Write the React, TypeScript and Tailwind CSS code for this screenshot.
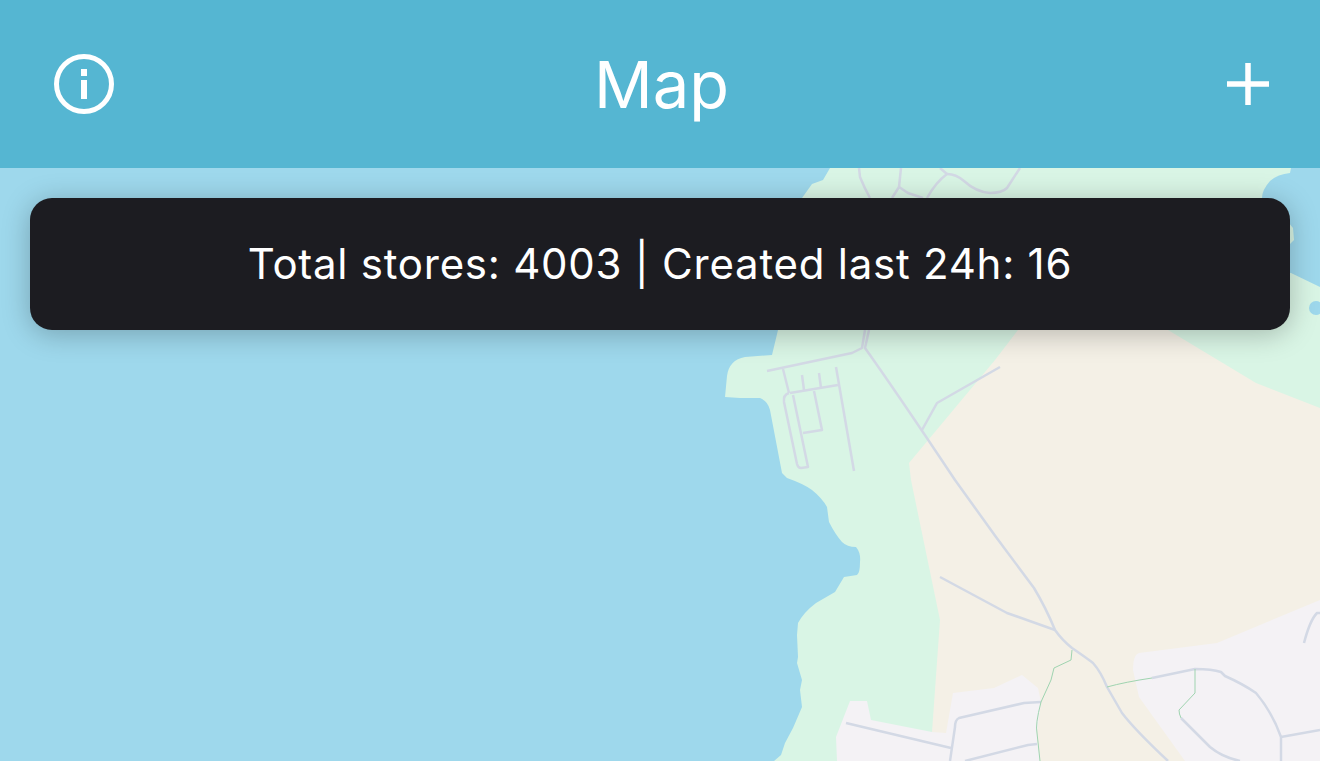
const roads = [
  "M865 330 L862 348 L852 353 L767 371",
  "M869 330 L865 348 C885 376 915 420 955 480 L996 537 L1034 588 Q1046 608 1055 630 Q1062 640 1072 648 Q1088 659 1093 663 Q1101 672 1107 687 L1122 713 Q1135 730 1168 761",
  "M940 577 L1007 613 L1055 630",
  "M922 430 L937 403 L1000 367",
  "M783 369 L789 393",
  "M802 375 L804 390",
  "M819 373 L821 388",
  "M836 367 L854 471",
  "M790 393 L838 385",
  "M814 391 L822 430 L803 433",
  "M789 393 Q783 395 784 402 L797 464 Q798 468 801 468 L808 467 L793 395",
  "M1041 702 L1024 703 L959 718 Q955 720 955 727 L950 761",
  "M846 723 L951 748",
  "M965 761 L1028 745 L1037 744",
  "M1152 678 L1195 669 Q1212 669 1221 672 L1225 676 Q1243 684 1256 693 Q1272 712 1281 737 L1281 761",
  "M1281 737 L1320 730",
  "M1181 718 L1210 747 Q1222 757 1240 761",
  "M1304 643 Q1310 620 1317 613 L1320 613",
  "M859 168 L860 177 Q864 187 870 198",
  "M901 168 L899 187 L892 198",
  "M899 187 L908 193 L923 198",
  "M940 168 L947 174 Q936 182 927 198",
  "M947 174 Q956 174 964 181 Q976 192 990 193 Q1002 193 1007 188 L1020 168",
];

const paths = [
  "M1072 650 L1071 660 L1054 668 L1051 680 L1041 702 Q1035 725 1037 733 L1040 761",
  "M1107 687 Q1125 682 1152 678",
  "M1195 669 L1195 693 L1179 710 Q1179 714 1181 718",
];

function MapCanvas() {
  return (
    <svg className="absolute inset-0 w-full h-full" viewBox="0 168 1320 593" preserveAspectRatio="none">
      <rect x="0" y="168" width="1320" height="593" fill="#d9f5e5" />
      {/* water */}
      <path
        fill="#9ed8ec"
        d="M0 168 H830 L823 180 L812 184 L802 198 L778 330 L772 355 L745 357 Q729 360 727 376 L725 397 L740 398 L760 398 Q768 401 770 410 L782 473 L787 478 Q804 484 812 490 Q822 498 827 507 L829 522 Q835 534 842 542 Q847 547 856 547 Q861 553 860 562 Q860 573 857 575 L844 577 L835 592 L816 603 Q804 612 798 623 L797 635 L798 657 L797 663 L802 680 L800 690 L802 707 L793 728 L785 743 L781 755 L774 761 H0 Z"
      />
      <path
        fill="#9ed8ec"
        d="M1291 168 L1290 173 Q1278 174 1270 181 Q1262 190 1262 198 V270 L1291 273 L1320 287 V168 Z"
      />
      <polygon fill="#d9f5e5" points="1288,222 1293,228 1294,240 1288,246" />
      <circle cx="1316" cy="308" r="7" fill="#9ed8ec" />
      {/* sand */}
      <polygon
        fill="#f4f0e6"
        points="1018,330 995,360 909,463 911,480 940,620 932,732 1040,761 1185,761 1320,761 1320,408 1256,383 1168,330"
      />
      {/* built up */}
      <polygon
        fill="#f4f2f5"
        points="837,761 836,737 850,701 867,701 871,720 932,732 946,733 953,693 994,688 1022,675 1038,688 1041,702 1037,733 1040,761"
      />
      <path
        fill="#f4f2f5"
        d="M1320 600 L1217 643 L1139 653 Q1133 655 1133 670 L1139 697 L1185 761 H1320 Z"
      />
      {roads.map((d) => (
        <path key={d} d={d} fill="none" stroke="#d3d9e5" strokeWidth="2.5" strokeLinejoin="round" />
      ))}
      {paths.map((d) => (
        <path key={d} d={d} fill="none" stroke="#9fd4b0" strokeWidth="1" strokeLinejoin="round" />
      ))}
    </svg>
  );
}

export default function App() {
  return (
    <div className="h-screen flex flex-col overflow-hidden font-['Inter',sans-serif]">
      <header className="h-[168px] shrink-0 bg-[#55b6d2] grid grid-cols-[1fr_auto_1fr] items-center pl-[54px] pr-[51px] text-white">
        <svg width="60" height="60" viewBox="0 0 60 60" fill="none">
          <circle cx="30" cy="30" r="27.5" stroke="white" strokeWidth="5" />
          <rect x="27" y="15" width="6" height="7" fill="white" />
          <rect x="27" y="26" width="6" height="19" fill="white" />
        </svg>
        <h1 className="text-[65px] font-normal leading-none">Map</h1>
        <svg className="justify-self-end" width="42" height="42" viewBox="0 0 42 42" fill="none">
          <path d="M21 0 V42 M0 21 H42" stroke="white" strokeWidth="5.5" />
        </svg>
      </header>
      <main className="relative flex-1 overflow-hidden">
        <MapCanvas />
        <div className="absolute top-[30px] left-[30px] right-[30px] h-[132px] rounded-[22px] bg-[#1c1c21] shadow-[0_4px_28px_rgba(0,0,0,0.25)] flex items-center justify-center pb-0.5 text-white text-[42px] font-normal tracking-[0.75px]">
          Total stores: 4003 | Created last 24h: 16
        </div>
      </main>
    </div>
  );
}
